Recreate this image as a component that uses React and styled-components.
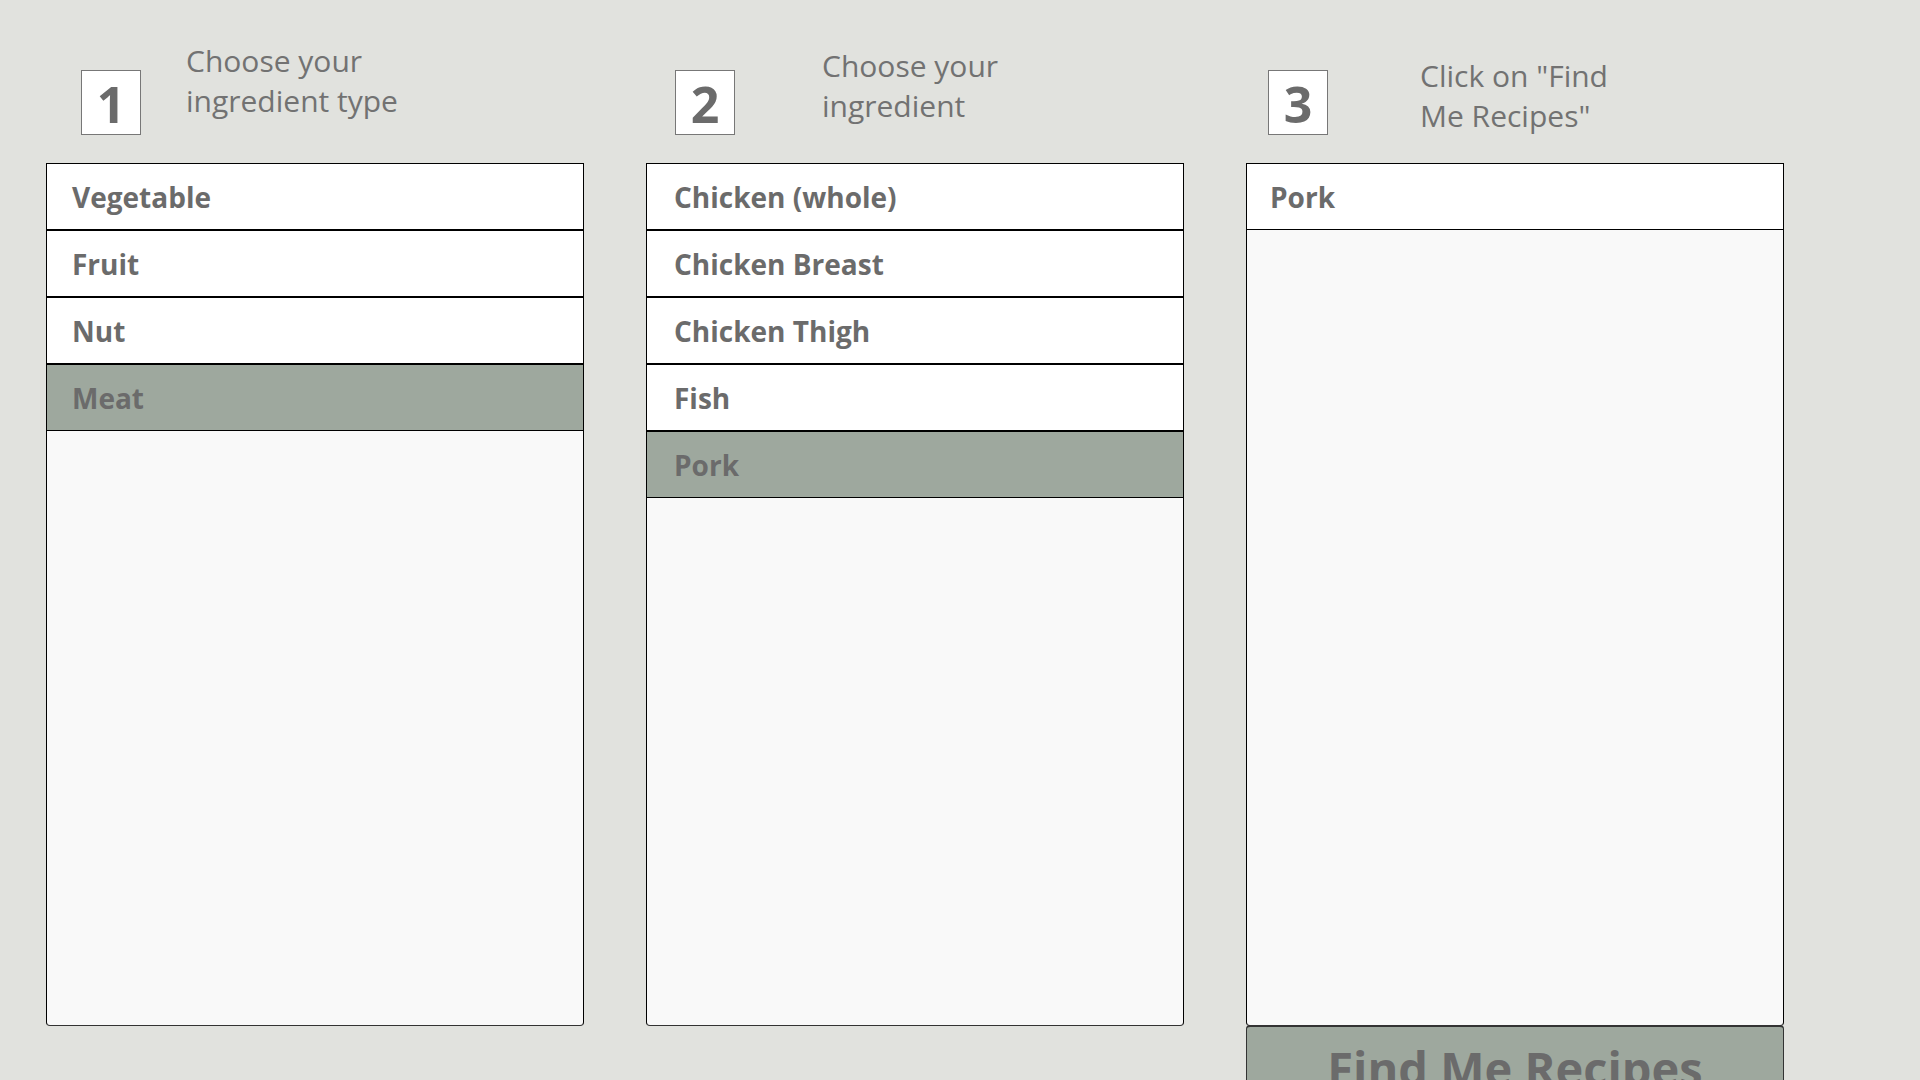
import React, { useState } from 'react';
import styled, { createGlobalStyle } from 'styled-components';

const GlobalStyle = createGlobalStyle`
  html, body {
    margin: 0;
    padding: 0;
    height: 100%;
    overflow: hidden;
    background-color: #e1e2de;
    font-family: "Open Sans", "Noto Sans", sans-serif;
  }
`;

const Page = styled.div`
  display: flex;
  gap: 62px;
  padding-left: 46px;
  height: 100vh;
  box-sizing: border-box;
`;

const Column = styled.div`
  width: 538px;
  display: flex;
  flex-direction: column;
`;

const Header = styled.div`
  display: flex;
  align-items: flex-start;
  height: 163px;
  flex-shrink: 0;
`;

const StepBox = styled.div`
  width: 58px;
  height: 63px;
  margin-top: 70px;
  margin-left: ${props => props.left}px;
  border: 1px solid #777777;
  background-color: #ffffff;
  color: #6b6b6b;
  font-size: 50px;
  font-weight: 700;
  line-height: 66px;
  text-align: center;
  flex-shrink: 0;
`;

const StepText = styled.div`
  margin-left: ${props => props.gap}px;
  margin-top: ${props => props.top}px;
  color: #727272;
  font-size: 30px;
  line-height: 40px;
  width: ${props => props.width}px;
`;

const Panel = styled.div`
  height: 861px;
  flex-shrink: 0;
  background-color: #f9f9f9;
  border: 1px solid #000000;
  border-bottom-color: #333333;
  border-radius: 0 0 4px 4px;
  display: flex;
  flex-direction: column;
`;

const Row = styled.div`
  height: 65px;
  flex-shrink: 0;
  display: flex;
  align-items: center;
  padding-left: ${props => props.indent}px;
  background-color: ${props => (props.selected ? '#9ea89e' : '#ffffff')};
  border-bottom: 1px solid #000000;
  color: #6b6b6b;
  font-size: 28px;
  font-weight: 700;
  cursor: pointer;

  & + & {
    border-top: 1px solid #000000;
  }
`;

const FindButton = styled.button`
  margin-top: -1px;
  height: 90px;
  flex-shrink: 0;
  padding: 13px 0 0;
  display: flex;
  justify-content: center;
  align-items: flex-start;
  background-color: #9ea89e;
  border: 1px solid #333333;
  border-top-width: 2px;
  border-radius: 4px 4px 0 0;
  color: #6b6b6b;
  font-family: "Open Sans", "Noto Sans", sans-serif;
  font-size: 47px;
  font-weight: 700;
  line-height: 56px;
  cursor: pointer;
`;

const types = ['Vegetable', 'Fruit', 'Nut', 'Meat'];
const meats = ['Chicken (whole)', 'Chicken Breast', 'Chicken Thigh', 'Fish', 'Pork'];

function App() {
  const [type, setType] = useState('Meat');
  const [ingredient, setIngredient] = useState('Pork');

  return (
    <>
      <GlobalStyle />
      <Page>
        <Column>
          <Header>
            <StepBox left={35}>1</StepBox>
            <StepText gap={45} top={41} width={260}>Choose your ingredient type</StepText>
          </Header>
          <Panel>
            {types.map(t => (
              <Row key={t} indent={25} selected={t === type} onClick={() => setType(t)}>{t}</Row>
            ))}
          </Panel>
        </Column>
        <Column>
          <Header>
            <StepBox left={29}>2</StepBox>
            <StepText gap={87} top={46} width={205}>Choose your ingredient</StepText>
          </Header>
          <Panel>
            {meats.map(m => (
              <Row key={m} indent={27} selected={m === ingredient} onClick={() => setIngredient(m)}>{m}</Row>
            ))}
          </Panel>
        </Column>
        <Column>
          <Header>
            <StepBox left={22}>3</StepBox>
            <StepText gap={92} top={56} width={210}>Click on "Find Me Recipes"</StepText>
          </Header>
          <Panel>
            <Row indent={23}>{ingredient}</Row>
          </Panel>
          <FindButton>Find Me Recipes</FindButton>
        </Column>
      </Page>
    </>
  );
}

export default App;
